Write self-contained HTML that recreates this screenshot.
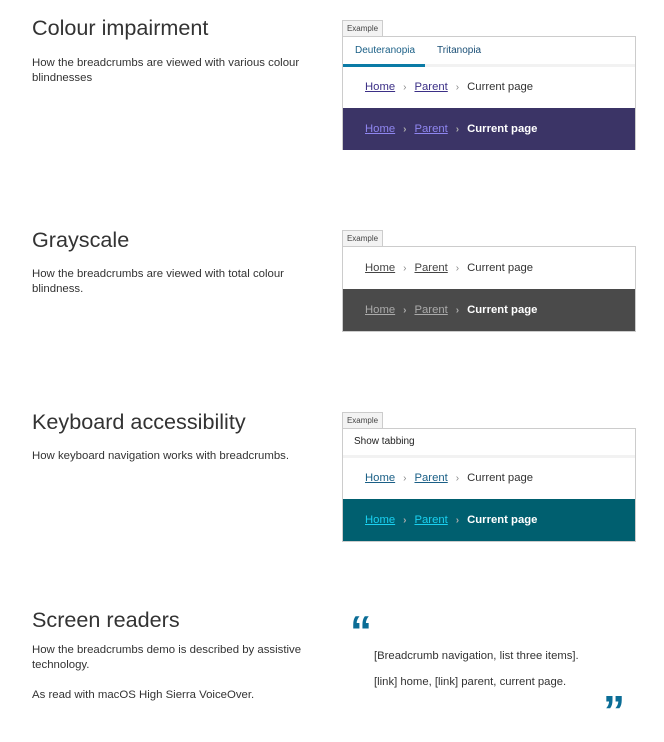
<!DOCTYPE html>
<html><head><meta charset="utf-8"><style>
*{margin:0;padding:0;box-sizing:border-box}
body{width:664px;height:742px;background:#fff;font-family:"Liberation Sans",Arial,sans-serif;color:#333;position:relative;overflow:hidden}
.a{position:absolute}
h2{position:absolute;left:32px;font-size:21.6px;font-weight:normal;color:#333;white-space:nowrap}
.d{position:absolute;left:32px;width:290px;font-size:11.4px;line-height:15px;color:#333}
.lab{position:absolute;left:342px;width:41px;height:17px;border:1px solid #ccc;border-bottom:none;background:#f3f3f3;font-size:8px;line-height:16px;text-align:center;color:#444}
.box{position:absolute;left:342px;width:294px;border:1px solid #ccc;background:#fff}
.row{position:absolute;left:0;right:0;font-size:11.3px;padding-left:22px;white-space:nowrap}
.row a{text-decoration:underline}
.row .s{display:inline-block;margin:0 8px;font-size:10px;color:#888}
.q{position:absolute;font-size:44px;font-weight:bold;color:#0b6d96;font-family:"Liberation Sans",sans-serif;line-height:44px}
</style></head><body>

<h2 style="top:15px">Colour impairment</h2>
<div class="d" style="top:56px">How the breadcrumbs are viewed with various colour blindnesses</div>
<div class="lab" style="top:20px">Example</div>
<div class="box" style="top:36px;height:114px">
 <div class="a" style="left:12px;top:8px;font-size:10px;color:#1a5f86">Deuteranopia</div>
 <div class="a" style="left:94px;top:8px;font-size:10px;color:#1a4f76">Tritanopia</div>
 <div class="a" style="left:0;right:0;top:27px;height:3px;background:#f2f2f2"></div>
 <div class="a" style="left:0;width:82px;top:27px;height:3px;background:#0b7ba6"></div>
 <div class="row" style="top:30px;height:41px;line-height:41px"><a style="color:#3b2f86">Home</a><span class="s">›</span><a style="color:#3b2f86">Parent</a><span class="s">›</span>Current page</div>
 <div class="row" style="top:71px;height:42px;line-height:42px;background:#3b3466;color:#fff;font-weight:bold"><a style="color:#8f86f0;font-weight:normal">Home</a><span class="s" style="color:#aaa">›</span><a style="color:#8f86f0;font-weight:normal">Parent</a><span class="s" style="color:#aaa">›</span>Current page</div>
</div>

<h2 style="top:227px">Grayscale</h2>
<div class="d" style="top:267px">How the breadcrumbs are viewed with total colour blindness.</div>
<div class="lab" style="top:230px">Example</div>
<div class="box" style="top:246px;height:86px">
 <div class="row" style="top:0;height:42px;line-height:42px"><a style="color:#444">Home</a><span class="s">›</span><a style="color:#444">Parent</a><span class="s">›</span>Current page</div>
 <div class="row" style="top:42px;height:42px;line-height:42px;background:#4a4a4a;color:#fff;font-weight:bold"><a style="color:#aaa;font-weight:normal">Home</a><span class="s" style="color:#aaa">›</span><a style="color:#aaa;font-weight:normal">Parent</a><span class="s" style="color:#aaa">›</span>Current page</div>
</div>

<h2 style="top:409px">Keyboard accessibility</h2>
<div class="d" style="top:449px">How keyboard navigation works with breadcrumbs.</div>
<div class="lab" style="top:412px">Example</div>
<div class="box" style="top:428px;height:114px">
 <div class="a" style="left:11px;top:7px;font-size:10px;color:#222">Show tabbing</div>
 <div class="a" style="left:0;right:0;top:26px;height:3px;background:#f2f2f2"></div>
 <div class="row" style="top:29px;height:41px;line-height:41px"><a style="color:#1a5f86">Home</a><span class="s">›</span><a style="color:#1a5f86">Parent</a><span class="s">›</span>Current page</div>
 <div class="row" style="top:70px;height:42px;line-height:42px;background:#005f6f;color:#fff;font-weight:bold"><a style="color:#1ad0f0;font-weight:normal">Home</a><span class="s" style="color:#aaa">›</span><a style="color:#1ad0f0;font-weight:normal">Parent</a><span class="s" style="color:#aaa">›</span>Current page</div>
</div>

<h2 style="top:607px">Screen readers</h2>
<div class="d" style="top:643px">How the breadcrumbs demo is described by assistive technology.</div>
<div class="d" style="top:688px">As read with macOS High Sierra VoiceOver.</div>
<div class="q" style="left:350px;top:610px">“</div>
<div class="a" style="left:374px;top:650px;font-size:11.3px">[Breadcrumb navigation, list three items].</div>
<div class="a" style="left:374px;top:676px;font-size:11.3px">[link] home, [link] parent, current page.</div>
<div class="q" style="left:603px;top:690px">”</div>
</body></html>
